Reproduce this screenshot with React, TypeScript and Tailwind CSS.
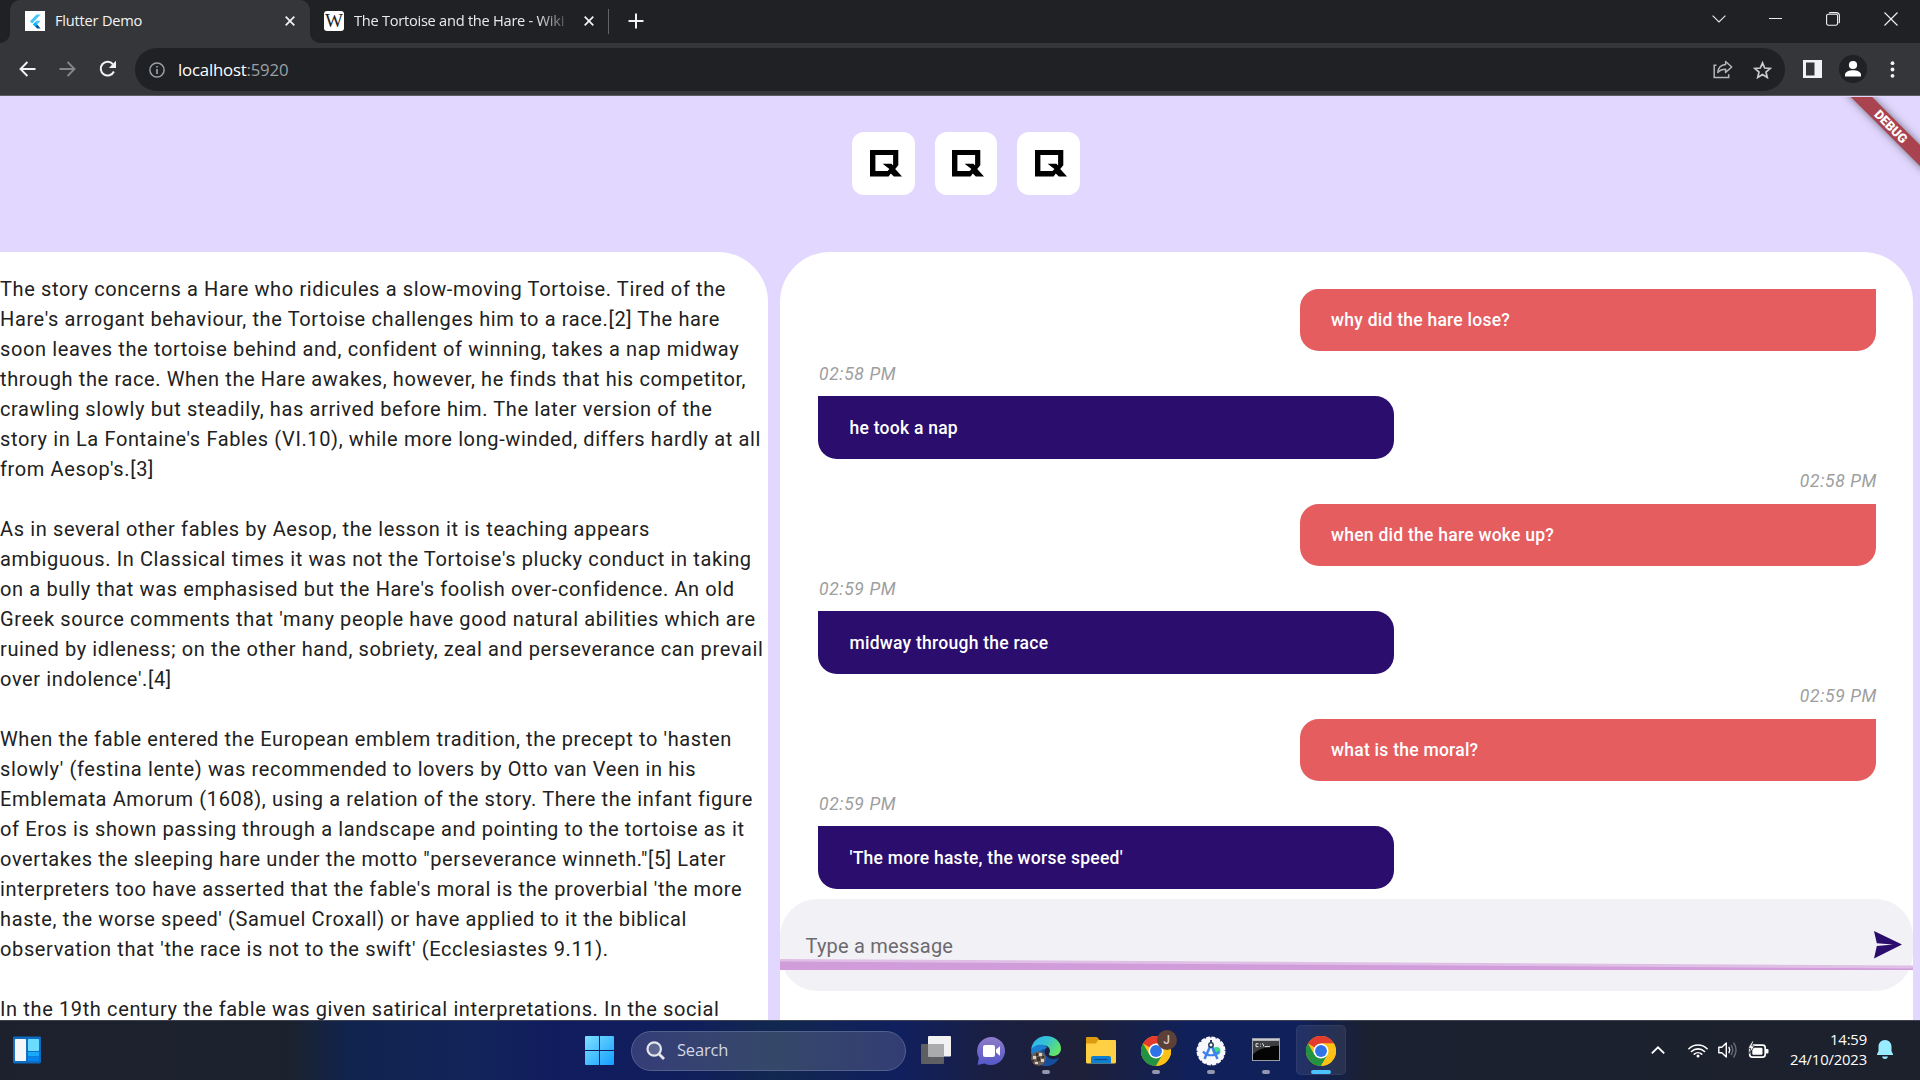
import React from "react";

const paragraphs: string[][] = [
  [
    "The story concerns a Hare who ridicules a slow-moving Tortoise. Tired of the",
    "Hare's arrogant behaviour, the Tortoise challenges him to a race.[2] The hare",
    "soon leaves the tortoise behind and, confident of winning, takes a nap midway",
    "through the race. When the Hare awakes, however, he finds that his competitor,",
    "crawling slowly but steadily, has arrived before him. The later version of the",
    "story in La Fontaine's Fables (VI.10), while more long-winded, differs hardly at all",
    "from Aesop's.[3]",
  ],
  [
    "As in several other fables by Aesop, the lesson it is teaching appears",
    "ambiguous. In Classical times it was not the Tortoise's plucky conduct in taking",
    "on a bully that was emphasised but the Hare's foolish over-confidence. An old",
    "Greek source comments that 'many people have good natural abilities which are",
    "ruined by idleness; on the other hand, sobriety, zeal and perseverance can prevail",
    "over indolence'.[4]",
  ],
  [
    "When the fable entered the European emblem tradition, the precept to 'hasten",
    "slowly' (festina lente) was recommended to lovers by Otto van Veen in his",
    "Emblemata Amorum (1608), using a relation of the story. There the infant figure",
    "of Eros is shown passing through a landscape and pointing to the tortoise as it",
    "overtakes the sleeping hare under the motto \"perseverance winneth.\"[5] Later",
    "interpreters too have asserted that the fable's moral is the proverbial 'the more",
    "haste, the worse speed' (Samuel Croxall) or have applied to it the biblical",
    "observation that 'the race is not to the swift' (Ecclesiastes 9.11).",
  ],
  ["In the 19th century the fable was given satirical interpretations. In the social"],
];

type Message = { text: string; mine: boolean; time?: string };

const messages: Message[] = [
  { text: "why did the hare lose?", mine: true },
  { text: "he took a nap", mine: false, time: "02:58 PM" },
  { text: "when did the hare woke up?", mine: true, time: "02:58 PM" },
  { text: "midway through the race", mine: false, time: "02:59 PM" },
  { text: "what is the moral?", mine: true, time: "02:59 PM" },
  { text: "'The more haste, the worse speed'", mine: false, time: "02:59 PM" },
];

function CloseX({ className = "" }: { className?: string }) {
  return (
    <svg className={className} width="10" height="10" viewBox="0 0 10 10" stroke="#f1f3f4" strokeWidth="1.7" fill="none">
      <path d="M.7.7 9.3 9.3M9.3.7.7 9.3" />
    </svg>
  );
}

function TabStrip() {
  return (
    <div className="flex h-[43px] bg-[#202124]">
      <div className="w-[10px] bg-[#35363a]">
        <div className="h-[43px] w-[10px] rounded-br-[10px] bg-[#202124]" />
      </div>
      <div className="flex w-[300px] items-center rounded-t-[10px] bg-[#35363a] px-[15px] pb-px">
        <div className="flex h-5 w-5 items-center justify-center bg-white">
          <svg width="12" height="15" viewBox="0 0 12 15">
            <path d="M7.6.6 1 7.3l2.1 2.1L11.6.6z" fill="#47c5fb" />
            <path d="M7.6 6.8 4 10.4l2.1 2.1 5.5-5.7z" fill="#47c5fb" />
            <path d="m4 10.4 2.1-2.1 2.1 2.1-2.1 2.1z" fill="#00b5f8" />
            <path d="m6.1 12.5 2.1-2.1 3.4 4.1H8.1z" fill="#00569e" />
          </svg>
        </div>
        <span className="mb-px ml-[10px] text-[14.6px] tracking-[-0.2px] text-[#f1f3f4]">Flutter Demo</span>
        <CloseX className="ml-auto" />
      </div>
      <div className="w-[10px] bg-[#35363a]">
        <div className="h-[43px] w-[10px] rounded-bl-[10px] bg-[#202124]" />
      </div>
      <div className="flex items-center pb-px">
        <div className="ml-[4px] flex h-5 w-5 items-center justify-center overflow-hidden rounded-[3px] bg-white">
          <span className="font-['Liberation_Serif',serif] text-[19px] leading-5 text-[#202124]">W</span>
        </div>
        <div className="mb-px ml-[10px] w-[213px] text-[14.6px] tracking-[-0.25px] whitespace-nowrap text-[#e8eaed] [mask-image:linear-gradient(to_right,black_86%,rgba(0,0,0,0.2))]">
          The Tortoise and the Hare - Wiki
        </div>
        <CloseX className="ml-[17px]" />
        <div className="ml-[14px] h-[25px] w-px bg-[#5f6368]" />
        <svg className="ml-[19px]" width="16" height="16" viewBox="0 0 16 16" stroke="#f1f3f4" strokeWidth="2">
          <path d="M8 .5v15M.5 8h15" />
        </svg>
      </div>
      <div className="ml-auto flex h-[37px] items-center pr-[22px]">
        <svg width="14" height="8" viewBox="0 0 14 8" fill="none" stroke="#e8eaed" strokeWidth="1.1">
          <path d="m.6.7 6.4 6.3L13.4.7" />
        </svg>
        <div className="ml-[43px] h-px w-[13px] bg-[#e8eaed]" />
        <svg className="ml-[44px]" width="14" height="14" viewBox="0 0 14 14" fill="none" stroke="#f1f3f4" strokeWidth="1.1">
          <rect x=".6" y="2.2" width="11" height="11" rx="1.6" />
          <path d="M3 1.2Q3.4.6 4.5.6H10q3.4 0 3.4 3.2v6q0 1-.8 1.3" />
        </svg>
        <svg className="ml-[44px]" width="14" height="14" viewBox="0 0 14 14" stroke="#f1f3f4" strokeWidth="1.1">
          <path d="M.5.5l13 13M13.5.5l-13 13" />
        </svg>
      </div>
    </div>
  );
}

function Toolbar() {
  return (
    <div className="flex h-[53px] items-center border-b border-[#5b5c62] bg-[#35363a] pl-[19px]">
      <svg width="17" height="16" viewBox="0 0 17 16" fill="none" stroke="#f1f3f4" strokeWidth="1.9">
        <path d="M16.5 8H1.8M8.4 1 1.5 8l6.9 7" />
      </svg>
      <svg className="ml-[23px]" width="17" height="16" viewBox="0 0 17 16" fill="none" stroke="#84868a" strokeWidth="1.9">
        <path d="M.5 8h14.7M8.6 1l6.9 7-6.9 7" />
      </svg>
      <svg className="ml-[23px]" width="18" height="18" viewBox="0 0 18 18">
        <path d="M14.9 11.5A6.9 6.9 0 1 1 14 4.3" fill="none" stroke="#f1f3f4" strokeWidth="2" />
        <path d="M17 .8v7.1H9.9z" fill="#f1f3f4" />
      </svg>
      <div className="ml-[18px] flex h-[43px] w-[1650px] items-center rounded-full bg-[#202124] pt-px pr-[13px] pl-[14px]">
        <svg width="16" height="16" viewBox="0 0 16 16" fill="none" stroke="#9aa0a6" strokeWidth="1.5">
          <circle cx="8" cy="8" r="7.1" />
          <path d="M8 7v5M8 3.9v1.7" strokeWidth="1.7" />
        </svg>
        <span className="ml-[13px] text-[16.8px] tracking-[-0.2px] text-white">
          localhost<span className="text-[#9aa0a6]">:5920</span>
        </span>
        <svg className="ml-auto" width="20" height="19" viewBox="0 0 20 19" fill="none" stroke="#b4b6b9" strokeWidth="1.5">
          <path d="M3.5 5.2H1.2v12.3h14.5v-3.3" />
          <path d="M4.8 12.5C5.2 8 8 5 12.6 4.6V1.5L18.7 7l-6.1 5.4V9.3C9 9.3 6.7 10.3 4.8 12.5z" strokeLinejoin="round" />
        </svg>
        <svg className="ml-[20px]" width="19" height="18" viewBox="0 0 19 18" fill="none" stroke="#c9cbce" strokeWidth="1.7">
          <path d="m9.5 1.9 2.2 5.1 5.5.5-4.2 3.6 1.3 5.4-4.8-2.9-4.8 2.9L6 11.1 1.800 7.500l5.500-.5z" />
        </svg>
      </div>
      <svg className="ml-[18px]" width="19" height="18" viewBox="0 0 19 18">
        <path fillRule="evenodd" d="M0 0h19v18H0zM3 2.5v13h8.5v-13z" fill="#f1f3f4" />
      </svg>
      <svg className="ml-[17px]" width="28" height="28" viewBox="0 0 28 28">
        <circle cx="14" cy="14" r="14" fill="#202124" />
        <circle cx="14" cy="10" r="4.1" fill="#fff" />
        <path d="M6 21.5v-2c0-2.700 4.500-4.200 8-4.200s8 1.500 8 4.200v2z" fill="#fff" />
      </svg>
      <svg className="ml-[23px]" width="5" height="17" viewBox="0 0 5 17" fill="#f1f3f4">
        <circle cx="2.5" cy="2.2" r="1.9" />
        <circle cx="2.5" cy="8.5" r="1.9" />
        <circle cx="2.5" cy="14.8" r="1.9" />
      </svg>
    </div>
  );
}

function LogoTile() {
  return (
    <div className="h-[62.5px] w-[62.5px] rounded-[12px] bg-white pt-[17.5px] pl-[17.5px]">
      <svg width="32" height="27" viewBox="0 0 32 27">
        <path
          fillRule="evenodd"
          d="M0 0h28.3v15.3l-3.1 3.6 6.8 7.6h-8.2l-3-3-2.2 3H0zM5.4 4.9v16.2h12.2l1.8-2.1-6.8-5.3h8.9l1.6 1.9V4.9z"
        />
      </svg>
    </div>
  );
}

function MessageRow({ message }: { message: Message }) {
  const { mine, text, time } = message;
  return (
    <div className={mine ? "flex flex-col items-end" : "flex flex-col items-start"}>
      {time && (
        <div
          className={
            mine
              ? "-mr-[1.5px] flex h-[45px] items-center text-[17.5px] tracking-[0.625px] text-[#9e9e9e] italic"
              : "flex h-[45px] items-center pl-px text-[17.5px] tracking-[0.625px] text-[#9e9e9e] italic"
          }
        >
          <span className="leading-5">{time}</span>
        </div>
      )}
      <div
        className={
          mine
            ? "flex h-[62.5px] w-[576px] items-center rounded-[18.75px] rounded-tr-none bg-[#e55d5f] pl-[31.5px]"
            : "flex h-[62.5px] w-[576px] items-center rounded-[18.75px] rounded-tl-none bg-[#2a0d6d] pt-px pl-[31.5px]"
        }
      >
        <span className="text-[17.5px] font-medium tracking-[0.25px] text-white">{text}</span>
      </div>
    </div>
  );
}

function DebugBanner() {
  return (
    <div className="pointer-events-none absolute top-px right-0 h-[90px] w-[90px] overflow-hidden">
      <div className="absolute top-[22px] left-[5.5px] flex h-[15px] w-[110px] rotate-45 items-center justify-center bg-[#a8434f] text-[12.75px] font-black text-white shadow-[0_0_8px_rgba(0,0,0,0.5)]">
        DEBUG
      </div>
    </div>
  );
}

function ChromeLogo() {
  return (
    <svg width="30" height="30" viewBox="0 0 48 48">
      <circle cx="24" cy="24" r="24" fill="#fbc116" />
      <path d="M24 24 3.2 12A24 24 0 0 1 44.8 12H24z" fill="#e33b2e" />
      <path d="M3.2 12A24 24 0 0 0 24 48L34.4 30 24 24 13.6 30z" fill="#229342" />
      <path d="M44.8 12A24 24 0 0 1 24 48L34.4 30 36 24 24 12z" fill="#fbc116" />
      <circle cx="24" cy="24" r="12" fill="#fff" />
      <circle cx="24" cy="24" r="9.5" fill="#2f74e6" />
    </svg>
  );
}

function Cell({ children, running, active }: { children: React.ReactNode; running?: boolean; active?: boolean }) {
  return (
    <div className="relative flex h-[59px] w-[55px] items-center justify-center">
      {active && <div className="absolute top-1 left-[3px] h-[50px] w-[50px] rounded-[5px] border border-white/5 bg-white/8" />}
      <div className="relative">{children}</div>
      {running && <div className="absolute bottom-[6px] h-1 w-2 rounded-full bg-[#9498ae]" />}
      {active && <div className="absolute bottom-[6px] h-1 w-5 rounded-full bg-[#4cc2ff]" />}
    </div>
  );
}

function Taskbar() {
  return (
    <div className="flex h-[60px] items-center border-t border-[#3f4452] bg-[linear-gradient(90deg,#1d212d_0px,#1b222e_290px,#11244f_350px,#12245a_480px,#111c5e_550px,#101e5c_690px,#12284f_770px,#101f5e_900px,#1a1f42_990px,#1e2039_1080px,#10205a_1190px,#10205a_1300px,#1b2130_1370px,#1c212c_1920px)] font-['Open_Sans',sans-serif]">
      <svg className="mb-px ml-[13px]" width="28" height="28" viewBox="0 0 29 28">
        <rect width="29" height="28" rx="1.5" fill="#0e6cc0" />
        <rect x="2" y="2.5" width="11.5" height="23" rx="1" fill="#f5f6f8" />
        <rect x="15.5" y="2.5" width="11.5" height="12.5" rx="1" fill="#6bdcfd" />
        <rect x="15.5" y="16" width="11.5" height="4.5" fill="#19a9fa" />
        <rect x="15.5" y="21" width="11.5" height="4.5" fill="#0683ec" />
      </svg>
      <svg className="ml-[544px]" width="29" height="29" viewBox="0 0 29 29">
        <defs>
          <linearGradient id="win" x1="0" y1="0" x2="1" y2="1" gradientUnits="objectBoundingBox">
            <stop offset="0" stopColor="#7fdfff" />
            <stop offset="1" stopColor="#12a0ff" />
          </linearGradient>
        </defs>
        <path d="M1 0h13v14H0V1q0-1 1-1zM15 0h13q1 0 1 1v13H15zM0 15h14v14H1q-1 0-1-1zM15 15h14v13q0 1-1 1H15z" fill="url(#win)" />
      </svg>
      <div className="ml-[17px] flex h-10 w-[275px] items-center rounded-full border border-[#52608c] bg-[linear-gradient(90deg,#353d78,#354869_50%,#333d74)] pl-[14px]">
        <svg width="19" height="19" viewBox="0 0 19 19" fill="none" stroke="#e4e6ee" strokeWidth="2.2">
          <circle cx="8.2" cy="8" r="6.7" fill="#5c6690" />
          <path d="m13 13 5 5" strokeWidth="2.8" />
        </svg>
        <span className="ml-[12px] text-[16.5px] tracking-[-0.2px] text-[#d3d7e4]">Search</span>
      </div>
      <div className="ml-[2px] flex">
        <Cell>
          <svg className="mb-[2px] block" width="30" height="28" viewBox="0 0 30 28">
            <rect y="8" width="23" height="20" rx="1" fill="#5d5f63" />
            <rect x="7" width="23" height="20.5" rx="1" fill="#f2f2f3" />
            <path d="M7 8h16v12.5H7z" fill="#a9abad" />
          </svg>
        </Cell>
        <Cell>
          <svg className="block" width="28" height="28" viewBox="0 0 28 28">
            <defs>
              <linearGradient id="chat" x1="0" y1="0" x2="0" y2="1">
                <stop offset="0" stopColor="#8f7cc9" />
                <stop offset="1" stopColor="#5458c8" />
              </linearGradient>
            </defs>
            <path d="M14 0a14 14 0 1 1-6.5 26.4L.5 28l1.4-7A14 14 0 0 1 14 0z" fill="url(#chat)" />
            <rect x="6" y="8" width="12" height="12" rx="2" fill="#fff" />
            <path d="m19 12.5 4-3.2v9.4l-4-3.2z" fill="#fff" />
          </svg>
        </Cell>
        <Cell running>
          <svg className="block" width="30" height="30" viewBox="0 0 30 30">
            <defs>
              <linearGradient id="edge" x1="0" y1="0" x2="1" y2="0.5">
                <stop offset="0" stopColor="#2fb4ee" />
                <stop offset="0.5" stopColor="#35c1d8" />
                <stop offset="1" stopColor="#62e26a" />
              </linearGradient>
            </defs>
            <path d="M0 15a15 15 0 0 1 4-8c5-3 10-1 12 5-3 0-4 6-2 10s5 5 9 5a15 15 0 0 1-8 3A15 15 0 0 1 0 15z" fill="#1a7fd0" />
            <path d="M14 13c-2 6 4 11 10 10 2-.3 3.500-1 4.500-2A15 15 0 0 1 15 30C9 30 6 25 7.500 20S10 13 14 13z" fill="#154f9c" />
            <path d="M0 14C1 5 8 0 15 0c9 0 15 6 15 12.5 0 5-4 7.5-8 7.5-3 0-4.500-1.200-4-2 2-3 1-8-5-9C7 8 2 10 0 14z" fill="url(#edge)" />
            <circle cx="7.500" cy="22.500" r="7.300" fill="#6d5f56" />
            <path d="M2 20h3v3H2zM8 17h3v3H8zM10 23h3v3h-3zM4 26h3v2H4z" fill="#d8d2c8" />
            <path d="M5 17h2v3H5zM6 21h3v4H6zM11 20h2v2h-2zM1 24h2v2H1z" fill="#3b302c" />
          </svg>
        </Cell>
        <Cell>
          <svg className="block" width="30" height="27" viewBox="0 0 30 27">
            <path d="M1 0h9q1 0 1.500.6L14 3.500V9H0V1q0-1 1-1z" fill="#dc9a10" />
            <path d="M12 3h17q1 0 1 1v21q0 1.500-1.500 1.500h-27Q0 26.500 0 25V7.500q0-1 1-1h9z" fill="#ffd043" />
            <path d="M5 26.500V21q0-2 2-2h16q2 0 2 2v5.500z" fill="#0f7fd2" />
            <path d="M8.500 22.500h13" stroke="#0a4c92" strokeWidth="1.2" />
          </svg>
        </Cell>
        <Cell running>
          <ChromeLogo />
          <div className="absolute -top-[6px] left-4 flex h-5 w-5 items-center justify-center rounded-full bg-[#5d4037] text-[12px] font-medium text-[#d5cbc6]">
            <span className="font-['Roboto',sans-serif] leading-none">J</span>
          </div>
        </Cell>
        <Cell running>
          <svg className="block" width="30" height="30" viewBox="0 0 30 30" fill="none">
            <circle cx="15" cy="15" r="13.6" fill="#f6f8fb" stroke="#f6f8fb" strokeWidth="1.8" strokeDasharray="4 1.340" />
            <circle cx="20.500" cy="15" r="4" fill="#3ddc84" />
            <path d="M14.300 10 8.500 23M15.700 10l5.800 13" stroke="#3f7ff0" strokeWidth="2.500" />
            <path d="M7 15.500c4 5 12 5 16 0" stroke="#3f7ff0" strokeWidth="2.200" />
            <path d="M15 4v4" stroke="#263c58" strokeWidth="2" />
            <circle cx="15" cy="9" r="2.200" fill="#fff" stroke="#263c58" strokeWidth="1.500" />
          </svg>
        </Cell>
        <Cell running>
          <svg className="mb-[2px] block" width="28" height="23" viewBox="0 0 28 24" preserveAspectRatio="none">
            <rect x=".5" y=".5" width="27" height="23" fill="#050505" stroke="#9fa3aa" />
            <path d="M1 3h26v5Q8 9 1 17z" fill="#3c3e42" />
            <path d="M1 1h26v2H1z" fill="#c9ccd1" />
            <path d="M6.500 6H4v3h2.500M8.500 6v.8M8.500 8.200V9M10.500 5.500l1.500 3.500M13 9h5" stroke="#e8e8e8" fill="none" />
          </svg>
        </Cell>
        <Cell active>
          <ChromeLogo />
        </Cell>
      </div>
      <div className="ml-auto flex items-center pr-[27px] pb-px">
        <svg width="14" height="8" viewBox="0 0 14 8" fill="none" stroke="#fff" strokeWidth="1.8">
          <path d="m.8 7.300 6.200-6 6.200 6" />
        </svg>
        <svg className="ml-[23px]" width="20" height="15" viewBox="0 0 20 15" fill="none" stroke="#fff" strokeWidth="1.6" strokeLinecap="round">
          <path d="M.9 5.700a13 13 0 0 1 18.200 0M3.500 8.500a9.300 9.300 0 0 1 13 0M6.300 11.200a5.400 5.400 0 0 1 7.400 0" />
          <circle cx="10" cy="13" r="1.500" fill="#fff" stroke="none" />
        </svg>
        <svg className="ml-[10px]" width="20" height="18" viewBox="0 0 20 18" fill="none" stroke="#fff" strokeWidth="1.4" strokeLinecap="round" strokeLinejoin="round">
          <path d="M.8 6.200h3L8.300 2v14l-4.500-4.200h-3z" />
          <path d="M11 6.300q1.500 2.700 0 5.400" />
          <path d="M13.300 4.500q3 4.500 0 9M15.800 2q4.500 7 0 14" stroke="#666b76" />
        </svg>
        <svg className="ml-[10px]" width="21" height="18" viewBox="0 0 21 18">
          <rect x="1.700" y="4.200" width="15.500" height="12" rx="2.600" fill="none" stroke="#fff" strokeWidth="1.700" />
          <path d="M18 8h1.500q1 0 1 1v2.500q0 1-1 1H18z" fill="#fff" />
          <rect x="4.300" y="6.700" width="10.200" height="7" rx="1" fill="#fff" />
          <path d="M4.300 0 0 7.300h2.700L1.500 12.500 6.600 5H3.800L5.800 0z" fill="#fff" stroke="#1c212c" strokeWidth=".8" />
        </svg>
        <div className="mb-[2px] ml-[19px] flex w-[79px] flex-col items-end text-[14.8px] leading-5 tracking-[-0.15px] whitespace-nowrap text-white">
          <span>14:59</span>
          <span>24/10/2023</span>
        </div>
        <svg className="ml-[10px]" width="16" height="20" viewBox="0 0 16 20" fill="#99ebff">
          <path d="M8 0c4 0 6.500 3 6.500 6.500V11l1.500 3.200V15H0v-.8L1.500 11V6.500C1.500 3 4 0 8 0zM5 16.500h6Q10.500 19 8 19t-3-2.500z" />
        </svg>
      </div>
    </div>
  );
}

export default function App() {
  return (
    <div className="flex h-[1080px] w-[1920px] flex-col overflow-hidden bg-[#e2d8ff] font-['Open_Sans',sans-serif]">
      <TabStrip />
      <Toolbar />
      <main className="relative flex h-[924px] flex-col overflow-hidden font-['Roboto',sans-serif]">
        <div className="flex h-[156px] shrink-0 justify-center gap-5 pt-[36px] pl-[11.5px]">
          <LogoTile />
          <LogoTile />
          <LogoTile />
        </div>
        <div className="flex h-[768px] gap-[12px]">
          <section className="w-[768px] overflow-hidden rounded-tr-[50px] bg-white pt-[22px] text-[20px] leading-[30px] tracking-[0.625px] text-[#212121]">
            {paragraphs.map((lines, i) => (
              <p key={i} className="mb-[30px] whitespace-nowrap">
                {lines.map((line) => (
                  <span key={line} className="block">
                    {line}
                  </span>
                ))}
              </p>
            ))}
          </section>
          <section className="flex w-[1133px] flex-col rounded-t-[50px] bg-white">
            <div className="h-[647px] pt-[36.6px] pr-[37.5px] pl-[38px]">
              {messages.map((m) => (
                <MessageRow key={m.text} message={m} />
              ))}
            </div>
            <div className="relative flex h-[92px] items-center rounded-[37.5px] bg-[#f2f1f6] pr-[11px] pl-[25.5px]">
              <span className="mt-[2px] text-[20px] tracking-[0.2px] text-[#6b6a6e]">Type a message</span>
              <svg className="ml-auto" width="28" height="28" viewBox="0 0 28 28" fill="#2a0d6d">
                <path d="M0 0 28 13.5 0 27.5 2.8 15 19 13.6 2.800 12.300z" />
              </svg>
              <svg className="absolute top-[60px] left-0" width="1133" height="11" viewBox="0 0 1133 11" preserveAspectRatio="none">
                <path d="M0 0 1133 6.500V11H0z" fill="#dfbfe6" />
                <path d="M0 2.500 1133 9.500V11H0z" fill="#d09cd9" />
              </svg>
            </div>
          </section>
        </div>
        <DebugBanner />
      </main>
      <Taskbar />
    </div>
  );
}
